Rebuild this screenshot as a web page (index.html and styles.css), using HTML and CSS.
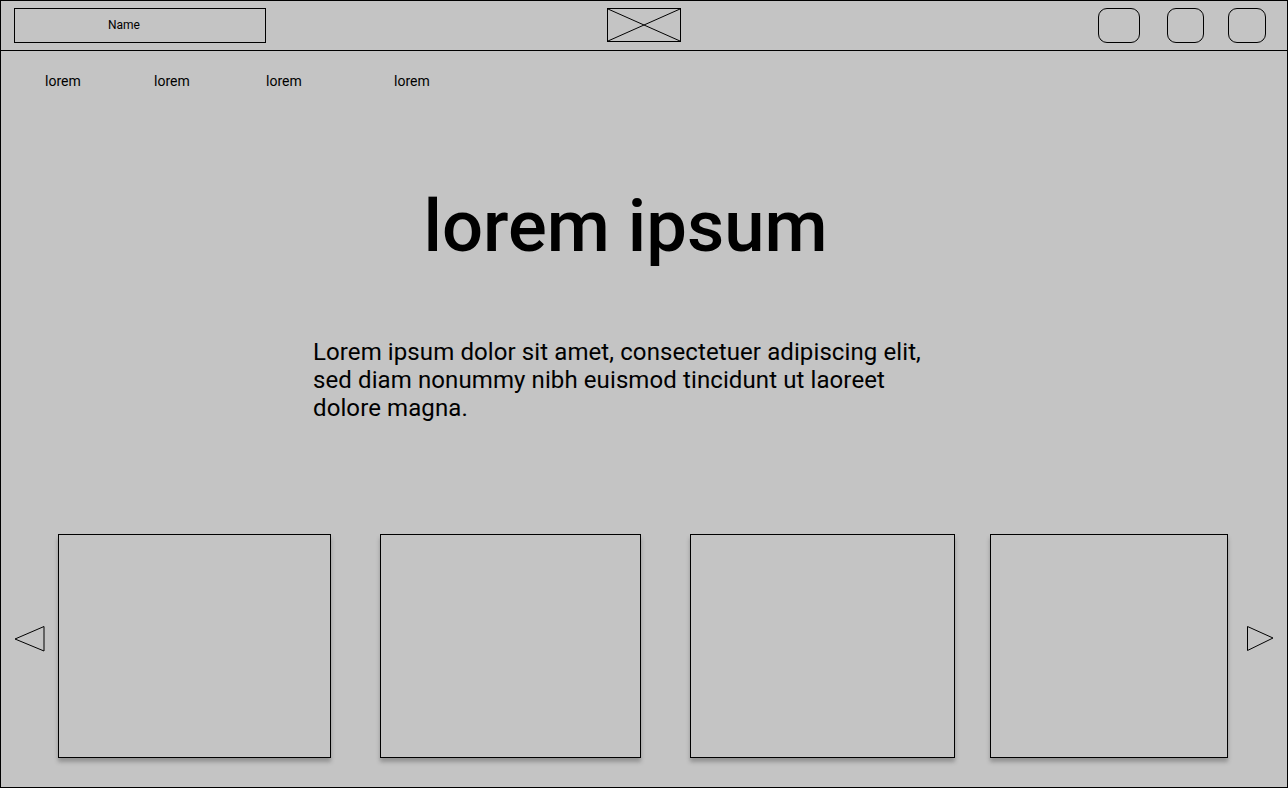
FILE: index.html
```html
<!DOCTYPE html>
<html lang="en">
<head>
    <meta charset="UTF-8">
    <meta name="viewport" content="width=device-width, initial-scale=1.0">
    <title>Wireframe</title>
    <link rel="stylesheet" href="styles.css">
</head>
<body>

    <div class="frame">
        <header class="top-bar">
            <div class="name-box">Name</div>
            <div class="logo">
                <svg width="74" height="34" viewBox="0 0 74 34">
                    <rect x="0.5" y="0.5" width="73" height="33" fill="none" stroke="#000"/>
                    <line x1="1" y1="1" x2="73" y2="33" stroke="#000"/>
                    <line x1="73" y1="1" x2="1" y2="33" stroke="#000"/>
                </svg>
            </div>
            <div class="icon-buttons">
                <div class="icon-btn wide"></div>
                <div class="icon-btn mid"></div>
                <div class="icon-btn narrow"></div>
            </div>
        </header>

        <nav class="main-nav">
            <a href="#">lorem</a>
            <a href="#">lorem</a>
            <a href="#">lorem</a>
            <a href="#">lorem</a>
        </nav>

        <section class="hero">
            <h1>lorem ipsum</h1>
            <p>Lorem ipsum dolor sit amet, consectetuer adipiscing elit, sed diam nonummy nibh euismod tincidunt ut laoreet dolore magna.</p>
        </section>

        <div class="carousel">
            <svg class="arrow arrow-left" width="32" height="28" viewBox="0 0 32 28">
                <polygon points="1,14 30,1.5 30,26" fill="none" stroke="#000"/>
            </svg>
            <div class="card card-1"></div>
            <div class="card card-2"></div>
            <div class="card card-3"></div>
            <div class="card card-4"></div>
            <svg class="arrow arrow-right" width="28" height="28" viewBox="0 0 28 28">
                <polygon points="0.5,1.5 26,13 0.5,25.5" fill="none" stroke="#000"/>
            </svg>
        </div>
    </div>

</body>
</html>
```

FILE: styles.css
```css
* {
    box-sizing: border-box;
}
body {
    margin: 0;
    font-family: Roboto, "Liberation Sans", sans-serif;
    background-color: #c4c4c4;
    color: #000;
}
.frame {
    width: 1288px;
    height: 788px;
    border: 1px solid #000;
    background-color: #c4c4c4;
}

/* top bar */
.top-bar {
    display: flex;
    align-items: flex-start;
    height: 50px;
    padding: 7px 21px 0 13px;
    border-bottom: 1px solid #000;
}
.name-box {
    width: 252px;
    height: 35px;
    border: 1px solid #000;
    padding-left: 93px;
    font-size: 12px;
    line-height: 33px;
}
.logo {
    margin-left: 341px;
    height: 34px;
}
.logo svg {
    display: block;
}
.icon-buttons {
    display: flex;
    margin-left: auto;
}
.icon-btn {
    height: 35px;
    border: 1px solid #000;
    border-radius: 9px;
}
.icon-btn.wide {
    width: 42px;
}
.icon-btn.mid {
    width: 37px;
    margin-left: 27px;
}
.icon-btn.narrow {
    width: 38px;
    margin-left: 24px;
}

/* nav */
.main-nav {
    display: grid;
    grid-template-columns: 109px 112px 128px auto;
    padding: 22px 0 0 44px;
    font-size: 14px;
    line-height: 16px;
}
.main-nav a {
    color: #000;
    text-decoration: none;
}

/* hero */
.hero {
    padding-right: 37px;
    text-align: center;
}
.hero h1 {
    margin: 96px 0 0;
    font-size: 72.4px;
    font-weight: 500;
    line-height: 84px;
}
.hero p {
    width: 640px;
    margin: 69px 0 0 312px;
    text-align: left;
    font-size: 24px;
    font-weight: 400;
    letter-spacing: 0.1px;
    line-height: 28px;
}

/* carousel */
.carousel {
    display: flex;
    align-items: flex-start;
    margin-top: 112px;
    padding-left: 13px;
}
.arrow {
    display: block;
    margin-top: 91px;
}
.arrow-left {
    margin-right: 12px;
}
.arrow-right {
    margin-left: 19px;
}
.card {
    height: 224px;
    border: 1px solid #000;
    box-shadow: 0 4px 4px rgba(0, 0, 0, 0.25);
}
.card-1 {
    width: 273px;
}
.card-2 {
    width: 261px;
    margin-left: 49px;
}
.card-3 {
    width: 265px;
    margin-left: 49px;
}
.card-4 {
    width: 238px;
    margin-left: 35px;
}
```
